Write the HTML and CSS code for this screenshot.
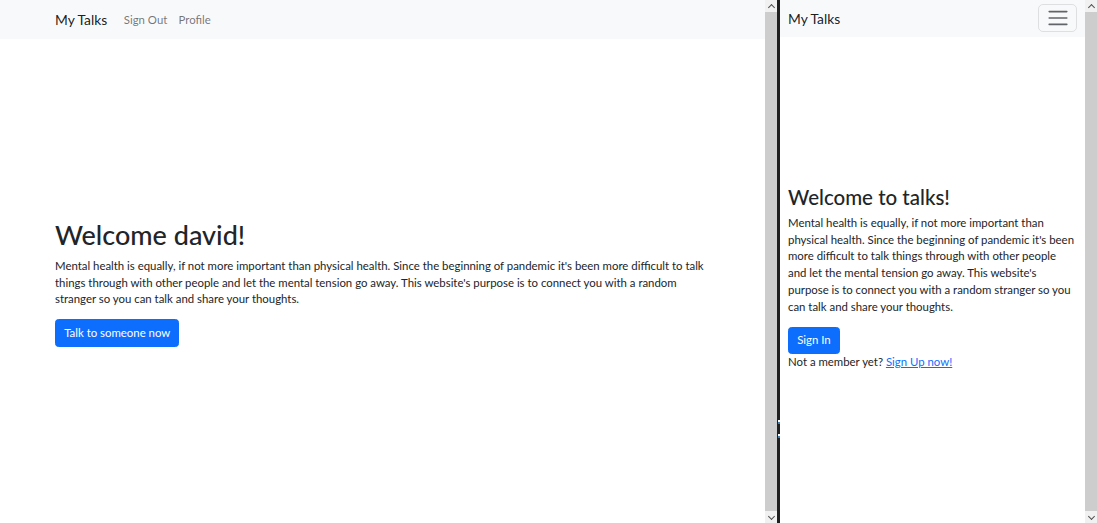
FILE: index.html
```html
<!DOCTYPE html>
<html lang="en">
<head>
<meta charset="utf-8">
<title>My Talks</title>
<link rel="stylesheet" href="styles.css">
</head>
<body>
<div class="screen">
  <section class="pane pane-left">
    <div class="viewport">
      <nav class="navbar">
        <div class="nav-container">
          <a class="brand" href="#">My Talks</a>
          <a class="nav-link" href="#">Sign Out</a>
          <a class="nav-link" href="#">Profile</a>
        </div>
      </nav>
      <main class="hero">
        <div class="hero-container">
          <h1 class="title">Welcome david!</h1>
          <p class="lead-text">Mental health is equally, if not more important than physical health. Since the beginning of pandemic it's been more difficult to talk things through with other people and let the mental tension go away. This website's purpose is to connect you with a random stranger so you can talk and share your thoughts.</p>
          <a class="btn" href="#">Talk to someone now</a>
        </div>
      </main>
    </div>
    <div class="scrollbar">
      <span class="arrow arrow-up"></span>
      <span class="thumb"></span>
      <span class="arrow arrow-down"></span>
    </div>
  </section>
  <div class="divider">
    <span class="grip"></span>
    <span class="grip"></span>
  </div>
  <section class="pane pane-right">
    <div class="viewport">
      <nav class="navbar navbar-small">
        <div class="nav-container-fluid">
          <a class="brand" href="#">My Talks</a>
          <button class="toggler" type="button" aria-label="Toggle navigation">
            <svg width="24" height="24" viewBox="0 0 30 30"><path stroke="rgba(33,37,41,0.7)" stroke-linecap="round" stroke-miterlimit="10" stroke-width="2" d="M4 7h22M4 15h22M4 23h22"/></svg>
          </button>
        </div>
      </nav>
      <main class="hero hero-right">
        <div class="hero-container-fluid">
          <h1 class="title title-small">Welcome to talks!</h1>
          <p class="lead-text">Mental health is equally, if not more important than physical health. Since the beginning of pandemic it's been more difficult to talk things through with other people and let the mental tension go away. This website's purpose is to connect you with a random stranger so you can talk and share your thoughts.</p>
          <a class="btn btn-tight" href="#">Sign In</a>
          <p class="member">Not a member yet? <a href="#">Sign Up now!</a></p>
        </div>
      </main>
    </div>
    <div class="scrollbar">
      <span class="arrow arrow-up"></span>
      <span class="thumb"></span>
      <span class="arrow arrow-down"></span>
    </div>
  </section>
</div>
</body>
</html>
```
FILE: styles.css
```css
* { box-sizing: border-box; }
html, body { margin: 0; padding: 0; }
body {
  font-family: "Lato", "Open Sans", sans-serif;
  font-size: 11.4px;
  line-height: 16.8px;
  color: #212529;
  background: #fff;
}
.screen {
  display: flex;
  width: 1097px;
  height: 523px;
  overflow: hidden;
}
.pane {
  display: flex;
  height: 523px;
}
.pane-left { width: 777px; }
.pane-right { width: 317px; }
.viewport {
  flex: 1;
  display: flex;
  flex-direction: column;
  min-width: 0;
}
.navbar {
  background: #f8f9fa;
  height: 39px;
  display: flex;
  align-items: center;
}
.navbar-small { height: 37px; }
.nav-container {
  padding-left: 55px;
  display: flex;
  align-items: center;
  padding-top: 2px;
}
.nav-container-fluid {
  flex: 1;
  padding: 1px 8px 0 8px;
  display: flex;
  align-items: center;
  justify-content: space-between;
}
.brand {
  font-size: 13.8px;
  color: rgba(0,0,0,.9);
  text-decoration: none;
  margin-right: 11px;
}
.nav-link {
  color: rgba(0,0,0,.55);
  text-decoration: none;
  padding: 0 5.6px;
}
.toggler {
  width: 39px;
  height: 28px;
  margin-top: -2px;
  padding: 0;
  display: flex;
  align-items: center;
  justify-content: center;
  background: transparent;
  border: 1px solid rgba(0,0,0,.1);
  border-radius: 5px;
}
.hero {
  flex: 1;
  display: flex;
  align-items: center;
}
.hero-right { padding-bottom: 4px; }
.hero-container {
  padding-left: 55px;
  width: 706px;
  padding-top: 4px;
}
.hero-container-fluid {
  padding: 0 10px 0 8px;
  width: 100%;
}
.title {
  font-size: 27px;
  font-weight: 500;
  line-height: 1.2;
  margin: 0 0 6px;
}
.title-small { font-size: 20.5px; margin-bottom: 5px; }
.lead-text {
  margin: 0 0 11.2px;
}
.btn {
  display: inline-block;
  background: #0d6efd;
  color: #fff;
  text-decoration: none;
  padding: 4.2px 8.2px;
  border: 0.7px solid #0d6efd;
  border-radius: 3.5px;
  line-height: 16.8px;
}
.member { margin: 0; }
.member a { color: #0d6efd; }
.scrollbar {
  width: 12px;
  background: #f1f1f1;
  display: flex;
  flex-direction: column;
}
.thumb {
  flex: 1;
  background: #cdcdcd;
}
.arrow {
  height: 12px;
  display: flex;
  align-items: center;
  justify-content: center;
}
.arrow::before {
  content: "";
  width: 4px;
  height: 4px;
  border-left: 1.5px solid #505050;
  border-top: 1.5px solid #505050;
}
.arrow-up::before { transform: translateY(1px) rotate(45deg); }
.arrow-down::before { transform: translateY(-1px) rotate(225deg); }
.divider {
  width: 3px;
  background: #1f1f1f;
  display: flex;
  flex-direction: column;
  justify-content: center;
  align-items: center;
  gap: 8px;
  padding-top: 336px;
}
.grip {
  width: 2px;
  height: 6px;
  background: linear-gradient(#fff 0 2px, #3b7fb5 2px 4px, #1f1f1f 4px);
}
```
